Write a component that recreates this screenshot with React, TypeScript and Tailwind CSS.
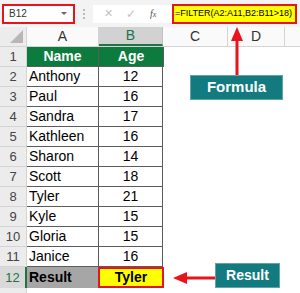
import React from "react";

const rows: [string, string][] = [
  ["Anthony", "12"],
  ["Paul", "16"],
  ["Sandra", "17"],
  ["Kathleen", "16"],
  ["Sharon", "14"],
  ["Scott", "18"],
  ["Tyler", "21"],
  ["Kyle", "15"],
  ["Gloria", "15"],
  ["Janice", "16"],
];

const font = { fontFamily: '"Liberation Sans", Arial, sans-serif' };

export default function App() {
  return (
    <div className="relative w-[300px] h-[293px] overflow-hidden bg-white" style={font}>
      {/* toolbar */}
      <div className="h-[27px] bg-[#f3f3f3] flex items-center">
        <div className="ml-[2px] w-[73px] h-[20px] border-2 border-[#e8141b] bg-white flex items-center justify-between pl-[5px] pr-[6px]">
          <span className="text-[10px] text-[#333]">B12</span>
          <span className="w-0 h-0 border-l-[3px] border-r-[3px] border-t-[3px] border-l-transparent border-r-transparent border-t-[#666]" />
        </div>
        <div className="w-[18px] flex flex-col items-center gap-[2px]">
          <span className="w-[2px] h-[2px] bg-[#bbb]" />
          <span className="w-[2px] h-[2px] bg-[#bbb]" />
          <span className="w-[2px] h-[2px] bg-[#bbb]" />
        </div>
        <div className="w-[79px] h-[18px] bg-white flex items-center">
          <span className="ml-[11px] text-[11px] text-[#c4c4c4] leading-none">✕</span>
          <span className="ml-[13px] text-[12px] text-[#c4c4c4] leading-none">✓</span>
          <span className="ml-[14px] text-[10px] italic text-[#555] leading-none" style={{ fontFamily: '"Liberation Serif", serif' }}>
            f<span className="text-[8px]">x</span>
          </span>
        </div>
        <div className="w-[125px] h-[20px] border-2 border-[#e8141b] bg-[#ffff00] flex items-center pl-[1px]">
          <span className="text-[9px] text-black whitespace-nowrap">=FILTER(A2:A11,B2:B11&gt;18)</span>
        </div>
      </div>

      {/* column header row */}
      <div className="flex h-[20px] border-b border-[#d4d4d4] bg-[#fafafa]">
        <div className="w-[27px] h-full bg-[#ececec] border-r border-[#d4d4d4] relative">
          <svg className="absolute right-[3px] bottom-[3px]" width="13" height="13" viewBox="0 0 13 13">
            <polygon points="13,0 13,13 0,13" fill="#b7b7b7" />
          </svg>
        </div>
        <div className="w-[72px] flex items-center justify-center text-[14px] text-[#333] border-r border-[#d4d4d4]">A</div>
        <div className="w-[64px] flex items-center justify-center text-[14px] text-[#217346] bg-[#d2d2d2] border-b-2 border-[#217346] border-r border-r-[#c0c0c0]">B</div>
        <div className="w-[65px] flex items-center justify-center text-[14px] text-[#333] border-r border-[#d4d4d4]">C</div>
        <div className="w-[57px] flex items-center justify-center text-[14px] text-[#333] border-r border-[#d4d4d4]">D</div>
        <div className="flex-1" />
      </div>

      {/* header data row */}
      <div className="flex h-[20px]">
        <div className="w-[27px] bg-[#ececec] border-r border-b border-[#d4d4d4] flex items-center justify-center text-[13px] text-[#444]">1</div>
        <div className="w-[72px] bg-[#0d7a3e] border-r border-b border-[#5c5c5c] flex items-center justify-center text-[14px] font-bold text-white">Name</div>
        <div className="w-[64px] bg-[#0d7a3e] border-b border-[#5c5c5c] flex items-center justify-center text-[14px] font-bold text-white">Age</div>
        <div className="flex-1 border-l border-[#5c5c5c]" />
      </div>

      {rows.map(([n, a], i) => (
        <div key={n} className="flex h-[20px]">
          <div className="w-[27px] bg-[#ececec] border-r border-b border-[#d4d4d4] flex items-center justify-center text-[13px] text-[#444]">{i + 2}</div>
          <div className="w-[72px] border-r border-b border-[#5c5c5c] flex items-center pl-[2px] text-[14px] text-black">{n}</div>
          <div className="w-[64px] border-b border-r border-[#5c5c5c] flex items-center justify-center text-[14px] text-black">{a}</div>
          <div className="flex-1" />
        </div>
      ))}

      {/* result row */}
      <div className="flex h-[21px]">
        <div className="w-[27px] bg-[#d9d9d9] border-r-2 border-[#217346] flex items-center justify-center text-[13px] text-[#217346]">12</div>
        <div className="w-[71px] bg-[#a6a6a6] flex items-center pl-[2px] text-[14px] font-bold text-black">Result</div>
        <div className="w-[66px] bg-[#ffff00] border-2 border-[#e8141b] flex items-center justify-center text-[14px] font-bold text-black">Tyler</div>
        <div className="flex-1" />
      </div>
      <div className="flex h-[10px]">
        <div className="w-[27px] bg-[#ececec] border-r border-[#d4d4d4]" />
        <div className="flex-1" />
      </div>

      {/* formula callout */}
      <svg className="absolute left-[229px] top-[26px]" width="16" height="50" viewBox="0 0 16 50">
        <polygon points="8,1 14,15 2,15" fill="#e8141b" />
        <rect x="6.5" y="14" width="3" height="36" fill="#e8141b" />
      </svg>
      <div className="absolute left-[190px] top-[75px] w-[93px] h-[25px] bg-[#137a7f] border border-[#5fa4a7] flex items-center justify-center text-[15px] font-bold text-white">
        Formula
      </div>

      {/* result callout */}
      <svg className="absolute left-[172px] top-[271px]" width="44" height="14" viewBox="0 0 44 14">
        <polygon points="1,7 15,1 15,13" fill="#e8141b" />
        <rect x="14" y="5.5" width="30" height="3" fill="#e8141b" />
      </svg>
      <div className="absolute left-[215px] top-[263px] w-[65px] h-[25px] bg-[#137a7f] border border-[#5fa4a7] flex items-center justify-center text-[14px] font-bold text-white">
        Result
      </div>
    </div>
  );
}
